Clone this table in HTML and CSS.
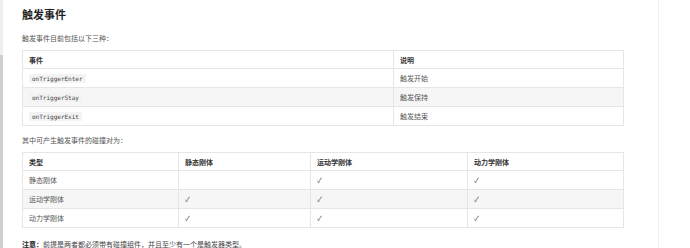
FILE: index.html
```html
<!DOCTYPE html>
<html lang="zh">
<head>
<meta charset="utf-8">
<link rel="stylesheet" href="styles.css">
</head>
<body>
<div class="page">
  <div class="rail"><div class="rail-top"></div><div class="rail-bottom"></div></div>
  <main class="content">
    <h2 class="title">触发事件</h2>
    <p class="para p1">触发事件目前包括以下三种：</p>
    <table class="tbl t1">
      <colgroup><col class="c-ev"><col class="c-desc"></colgroup>
      <thead><tr><th>事件</th><th>说明</th></tr></thead>
      <tbody>
        <tr><td><code>onTriggerEnter</code></td><td>触发开始</td></tr>
        <tr class="alt"><td><code>onTriggerStay</code></td><td>触发保持</td></tr>
        <tr><td><code>onTriggerExit</code></td><td>触发结束</td></tr>
      </tbody>
    </table>
    <p class="para p2">其中可产生触发事件的碰撞对为：</p>
    <table class="tbl t2">
      <colgroup><col class="c1"><col class="c2"><col class="c3"><col class="c4"></colgroup>
      <thead><tr><th>类型</th><th>静态刚体</th><th>运动学刚体</th><th>动力学刚体</th></tr></thead>
      <tbody>
        <tr><td>静态刚体</td><td></td><td>✓</td><td>✓</td></tr>
        <tr class="alt"><td>运动学刚体</td><td>✓</td><td>✓</td><td>✓</td></tr>
        <tr><td>动力学刚体</td><td>✓</td><td>✓</td><td>✓</td></tr>
      </tbody>
    </table>
    <p class="para note"><strong>注意：</strong>前提是两者都必须带有碰撞组件，并且至少有一个是触发器类型。</p>
  </main>
  <div class="side"></div>
</div>
</body>
</html>
```
FILE: styles.css
```css
html, body {
  margin: 0;
  padding: 0;
  background: #fff;
}
body {
  font-family: "Noto Sans CJK SC", "Noto Sans", sans-serif;
  color: #555;
  width: 690px;
  height: 248px;
  overflow: hidden;
}
.page {
  display: flex;
  height: 248px;
}
.rail {
  width: 3px;
  display: flex;
  flex-direction: column;
}
.rail-top {
  height: 55px;
  background: #efefef;
}
.rail-bottom {
  flex: 1;
  background: #cfcfcf;
}
.content {
  width: 636px;
  padding-left: 19px;
  border-right: 1px solid #efefef;
}
.side {
  flex: 1;
}
.title {
  margin: 0;
  padding-top: 7px;
  height: 15px;
  font-size: 11px;
  line-height: 15px;
  font-weight: 700;
  color: #222;
}
.para {
  margin: 0;
  font-size: 7px;
  line-height: 10px;
  color: #555;
}
.p1 {
  padding-top: 11px;
  height: 10px;
  margin-bottom: 7px;
}
.p2 {
  margin-top: 9px;
  height: 10px;
  margin-bottom: 7px;
}
.note {
  margin-top: 11px;
  color: #444;
}
.note strong {
  color: #222;
}
.tbl {
  border-collapse: collapse;
  table-layout: fixed;
  width: 601px;
  font-size: 7px;
}
.tbl th, .tbl td {
  border: 1px solid #e6e6e6;
  padding: 0 6px;
  text-align: left;
  height: 18px;
  line-height: 10px;
  color: #555;
}
.tbl th {
  height: 17px;
  font-weight: 700;
  color: #333;
}
.tbl tr.alt td {
  background: #f6f6f6;
}
.c-ev { width: 371px; }
.c-desc { width: 230px; }
.c1 { width: 156px; }
.c2 { width: 132px; }
.c3 { width: 157px; }
.c4 { width: 156px; }
code {
  font-family: "DejaVu Sans Mono", "Liberation Mono", monospace;
  font-size: 6px;
  background: #f3f3f3;
  padding: 1px 3px;
  border-radius: 1px;
  color: #444;
}
```
